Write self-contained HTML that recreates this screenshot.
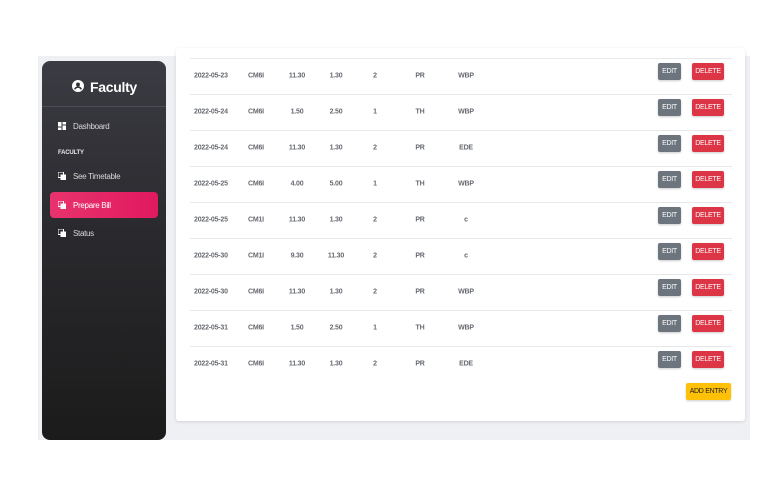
<!DOCTYPE html>
<html><head><meta charset="utf-8"><style>
*{margin:0;padding:0;box-sizing:border-box}
body{width:764px;height:478px;background:#fff;position:relative;overflow:hidden;font-family:"Liberation Sans",sans-serif}
.bg{position:absolute;left:38px;top:56px;width:712px;height:384px;background:#eff0f4}
.side{position:absolute;left:42px;top:61px;width:124px;height:379px;border-radius:8px;background:linear-gradient(180deg,#3b3b43 0%,#2a2a2e 45%,#1b1b1b 100%)}
.title{position:absolute;left:90px;top:79px;color:#fff;font-size:14px;font-weight:bold;letter-spacing:-0.3px}
.hr{position:absolute;left:42px;top:106px;width:124px;height:1px;background:rgba(255,255,255,.12)}
.item{position:absolute;left:73px;color:#d8d8dc;font-size:8px;letter-spacing:-0.3px}
.ic{position:absolute;left:58px;width:8px;height:8px}
.sec{position:absolute;left:58px;top:150px;color:#e8e8ea;font-size:6px;font-weight:bold;letter-spacing:-0.2px}
.active{position:absolute;left:50px;top:192px;width:108px;height:26px;border-radius:4px;background:linear-gradient(90deg,#e8336e,#e0195e)}
.card{position:absolute;left:176px;top:48px;width:569px;height:373px;background:#fff;border-radius:3px;box-shadow:0 1px 3px rgba(0,0,0,.12)}
.line{position:absolute;left:190px;width:542px;height:1px;background:#e6e8eb}
.c{position:absolute;font-size:7px;color:#666a70;transform:translateY(-50%);letter-spacing:-0.2px;font-weight:bold;-webkit-text-stroke:0}
.btn{position:absolute;height:17px;border-radius:2px;color:#fff;font-size:7px;line-height:17px;text-align:center;box-shadow:0 1px 2px rgba(0,0,0,.2);letter-spacing:-0.3px}
.e{left:658px;width:23px;background:#6c757d}
.d{left:692px;width:32px;background:#dc3545}
.add{left:686px;top:383px;width:45px;background:#ffc107;color:#222}
</style></head><body>
<div class="bg"></div>
<div class="side"></div>
<svg style="position:absolute;left:72px;top:80px" width="12" height="12" viewBox="0 0 16 16"><circle cx="8" cy="8" r="8" fill="#fff"/><circle cx="8" cy="6" r="2.6" fill="#333"/><path d="M3.5 12.5c1-2 2.6-3 4.5-3s3.5 1 4.5 3" stroke="#333" stroke-width="2" fill="none"/></svg>
<div class="title">Faculty</div>
<div class="hr"></div>
<svg class="ic" style="top:122px" viewBox="0 0 8 8"><rect x="0" y="0" width="3.5" height="4.5" fill="#fff"/><rect x="4.5" y="0" width="3.5" height="2.5" fill="#fff"/><rect x="0" y="5.5" width="3.5" height="2.5" fill="#fff"/><rect x="4.5" y="3.5" width="3.5" height="4.5" fill="#fff"/></svg>
<div class="item" style="top:122px">Dashboard</div>
<div class="sec">FACULTY</div>
<svg class="ic" style="top:172px" viewBox="0 0 8 8"><rect x="0" y="0" width="5.5" height="5.5" fill="none" stroke="#fff" stroke-width="1"/><rect x="2.5" y="2.5" width="5.5" height="5.5" fill="#fff"/></svg>
<div class="item" style="top:172px">See Timetable</div>
<div class="active"></div>
<svg class="ic" style="top:201px" viewBox="0 0 8 8"><rect x="0" y="0" width="5.5" height="5.5" fill="none" stroke="#fff" stroke-width="1"/><rect x="2.5" y="2.5" width="5.5" height="5.5" fill="#fff"/></svg>
<div class="item" style="top:201px;color:#fff">Prepare Bill</div>
<svg class="ic" style="top:229px" viewBox="0 0 8 8"><rect x="0" y="0" width="5.5" height="5.5" fill="none" stroke="#fff" stroke-width="1"/><rect x="2.5" y="2.5" width="5.5" height="5.5" fill="#fff"/></svg>
<div class="item" style="top:229px">Status</div>
<div class="card"></div>
<div id="rows"></div>
<script>
var d=[["2022-05-23","CM6I","11.30","1.30","2","PR","WBP"],["2022-05-24","CM6I","1.50","2.50","1","TH","WBP"],["2022-05-24","CM6I","11.30","1.30","2","PR","EDE"],["2022-05-25","CM6I","4.00","5.00","1","TH","WBP"],["2022-05-25","CM1I","11.30","1.30","2","PR","c"],["2022-05-30","CM1I","9.30","11.30","2","PR","c"],["2022-05-30","CM6I","11.30","1.30","2","PR","WBP"],["2022-05-31","CM6I","1.50","2.50","1","TH","WBP"],["2022-05-31","CM6I","11.30","1.30","2","PR","EDE"]];
var cx=[[194,0],[248,0],[297,1],[336,1],[375,1],[420,1],[466,1]];
var h="";
for(var i=0;i<d.length;i++){var y=58+i*36;h+='<div class="line" style="top:'+y+'px"></div>';var cy=y+18;
for(var j=0;j<7;j++){var s=cx[j][1]?'left:'+(cx[j][0]-20)+'px;width:40px;text-align:center;':'left:'+cx[j][0]+'px;';h+='<div class="c" style="'+s+'top:'+cy+'px">'+d[i][j]+'</div>';}
h+='<div class="btn e" style="top:'+(y+5)+'px">EDIT</div><div class="btn d" style="top:'+(y+5)+'px">DELETE</div>';}
h+='<div class="btn add">ADD ENTRY</div>';
document.getElementById("rows").innerHTML=h;
</script>
</body></html>
